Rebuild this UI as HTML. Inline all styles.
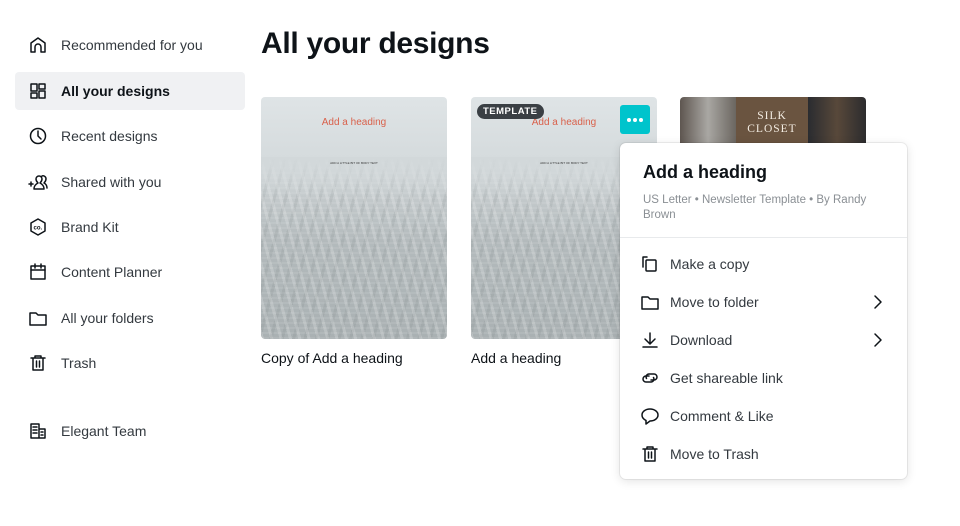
<!DOCTYPE html>
<html><head><style>
body{margin:0;width:960px;height:526px;background:#fff;font-family:"Liberation Sans",sans-serif;position:relative;overflow:hidden;color:#0e1318}
.it{position:absolute;left:15px;width:230px;height:38px;border-radius:4px;display:flex;align-items:center;font-size:14px;color:#33393f}
.it svg{position:absolute;left:13px;width:20px;height:20px}
.it span{position:absolute;left:46px}
.sel{background:#f0f1f3;font-weight:bold;color:#0e1318}
h1{position:absolute;left:261px;top:27px;margin:0;font-size:30px;font-weight:bold;letter-spacing:-.3px}
.thumb{position:absolute;top:97px;width:186px;height:242px;border-radius:4px;overflow:hidden;
background:linear-gradient(#dfe4e6 0%,#d5dbdd 25%,#c3c9cb 42%,#b3babc 60%,#aab1b3 100%)}
.thumb .tx{position:absolute;top:20px;width:100%;text-align:center;color:#d9604a;font-size:10px}
.thumb .sm{position:absolute;top:64px;width:100%;text-align:center;font-size:3px;color:#333}
.tex{position:absolute;left:0;right:0;top:60px;bottom:0;background:linear-gradient(rgba(210,216,218,1),rgba(210,216,218,0) 40px),repeating-linear-gradient(75deg,rgba(255,255,255,.18) 0 3px,transparent 3px 9px),repeating-linear-gradient(105deg,rgba(90,100,100,.1) 0 3px,transparent 3px 11px),repeating-linear-gradient(0deg,rgba(255,255,255,.08) 0 2px,transparent 2px 5px)}
.cap{position:absolute;top:350px;font-size:14px;color:#0e1318}
.menu{position:absolute;left:620px;top:143px;width:287px;height:336px;background:#fff;border-radius:6px;box-shadow:0 0 0 1px rgba(0,0,0,.06),0 2px 10px rgba(0,0,0,.12)}
.mi{position:absolute;left:0;width:287px;height:38px;font-size:14px;color:#33393f}
.mi svg{position:absolute;left:20px;top:9px;width:20px;height:20px}
.mi span{position:absolute;left:50px;top:11px}
.mi .ch{position:absolute;left:250px;top:11px;width:16px;height:16px}
svg{fill:none;stroke:#0e1318;stroke-width:1.5;stroke-linecap:round;stroke-linejoin:round}
.dot{position:absolute;top:13px;width:4px;height:4px;border-radius:50%;background:#fff}
</style></head><body>
<div class="it" style="top:26px"><svg viewBox="0 0 20 20"><path d="M3 17V8l7-5 7 5v9h-4v-5a3 3 0 0 0-6 0v5z"/></svg><span>Recommended for you</span></div>
<div class="it sel" style="top:72px"><svg viewBox="0 0 20 20"><rect x="3" y="3" width="6" height="7"/><rect x="11" y="3" width="6" height="5"/><rect x="3" y="12" width="6" height="5"/><rect x="11" y="10" width="6" height="7"/></svg><span>All your designs</span></div>
<div class="it" style="top:117px"><svg viewBox="0 0 20 20"><circle cx="10" cy="10" r="7.5"/><path d="M10 5v5l3 3"/></svg><span>Recent designs</span></div>
<div class="it" style="top:163px"><svg viewBox="0 0 20 20"><path d="M1 12h4M3 10v4M6 17c0-3 2-5 4-6-1-1-2-2-2-4a3 3 0 0 1 6 0c0 2-1 3-2 4 2 1 4 3 4 6zM14 4a3 3 0 0 1 4 3c0 2-1 3-2 4 2 1 3 3 3 5"/></svg><span>Shared with you</span></div>
<div class="it" style="top:208px"><svg viewBox="0 0 20 20"><path d="M10 2l7 4v8l-7 4-7-4V6z"/><text x="5.5" y="12.5" font-size="6" stroke="none" fill="#0e1318" font-family="Liberation Sans" font-weight="bold">co.</text></svg><span>Brand Kit</span></div>
<div class="it" style="top:253px"><svg viewBox="0 0 20 20"><rect x="3" y="4" width="14" height="13"/><path d="M3 8h14M7 2v4M13 2v4"/></svg><span>Content Planner</span></div>
<div class="it" style="top:299px"><svg viewBox="0 0 20 20"><path d="M2 5h6l2 2h8v10H2z"/></svg><span>All your folders</span></div>
<div class="it" style="top:344px"><svg viewBox="0 0 20 20"><path d="M3 5h14M7 5V3h6v2M5 5v12h10V5M8.5 8v6M11.5 8v6"/></svg><span>Trash</span></div>
<div class="it" style="top:412px"><svg viewBox="0 0 20 20"><path d="M3 3h8v14H3zM11 8h6v9h-6M5 6h4M5 9h4M5 12h4M13 11h2M13 14h2"/></svg><span>Elegant Team</span></div>

<h1>All your designs</h1>
<div class="thumb" style="left:261px"><div class="tex"></div><div class="tx">Add a heading</div><div class="sm">ADD A LITTLE BIT OF BODY TEXT</div></div>
<div class="thumb" style="left:471px"><div class="tex"></div><div class="tx">Add a heading</div><div class="sm">ADD A LITTLE BIT OF BODY TEXT</div>
<div style="position:absolute;left:6px;top:7px;background:#3a3f44;color:#fff;font-size:9.5px;font-weight:bold;padding:2px 6px;border-radius:8px;letter-spacing:.5px">TEMPLATE</div>
<div style="position:absolute;left:149px;top:8px;width:30px;height:29px;background:#00c4cc;border-radius:3px"><div class="dot" style="left:7px"></div><div class="dot" style="left:13px"></div><div class="dot" style="left:19px"></div></div></div>
<div style="position:absolute;left:680px;top:97px;width:186px;height:50px;border-radius:4px 4px 0 0;overflow:hidden;display:flex">
<div style="width:56px;background:linear-gradient(90deg,#5e5650,#a9a7a3,#6b6660)"></div>
<div style="width:72px;background:#6a5440;color:#f3ece2;font-family:'Liberation Serif',serif;font-size:11.5px;text-align:center;line-height:13px;padding-top:13px;letter-spacing:1px">SILK<br>CLOSET</div>
<div style="flex:1;background:linear-gradient(90deg,#2a2c30,#58483a,#2c2c2e)"></div></div>
<div class="cap" style="left:261px">Copy of Add a heading</div>
<div class="cap" style="left:471px">Add a heading</div>

<div class="menu">
<div style="position:absolute;left:23px;top:19px;font-size:18px;font-weight:bold;color:#0e1318">Add a heading</div>
<div style="position:absolute;left:23px;top:50px;width:240px;font-size:11.5px;line-height:15px;color:#8a8f94">US Letter • Newsletter Template • By Randy Brown</div>
<div style="position:absolute;left:0;right:0;top:94px;border-top:1px solid #e8eaec"></div>
<div class="mi" style="top:102px"><svg viewBox="0 0 20 20"><path d="M7 3H3v10"/><rect x="6" y="6" width="10" height="11" rx="1"/></svg><span>Make a copy</span></div>
<div class="mi" style="top:140px"><svg viewBox="0 0 20 20"><path d="M2 5h6l2 2h8v10H2z"/></svg><span>Move to folder</span><svg class="ch" viewBox="0 0 16 16" style="left:250px"><path d="M5 2l6 6-6 6"/></svg></div>
<div class="mi" style="top:178px"><svg viewBox="0 0 20 20"><path d="M10 3v10M5 9l5 5 5-5M3 17h14"/></svg><span>Download</span><svg class="ch" viewBox="0 0 16 16" style="left:250px"><path d="M5 2l6 6-6 6"/></svg></div>
<div class="mi" style="top:216px"><svg viewBox="0 0 20 20"><path d="M9 8H6a3 3 0 0 0 0 6h5a3 3 0 0 0 2.5-4.5"/><path d="M11 12h3a3 3 0 0 0 0-6H9a3 3 0 0 0-2.5 4.5"/></svg><span>Get shareable link</span></div>
<div class="mi" style="top:254px"><svg viewBox="0 0 20 20"><path d="M10 3c4.5 0 8 2.7 8 6s-3.5 6-8 6l-4 3v-3.6C3.600 13.300 2 11.300 2 9c0-3.300 3.500-6 8-6z"/></svg><span>Comment &amp; Like</span></div>
<div class="mi" style="top:292px"><svg viewBox="0 0 20 20"><path d="M3 5h14M7 5V3h6v2M5 5v12h10V5M8.5 8v6M11.5 8v6"/></svg><span>Move to Trash</span></div>
</div>
</body></html>
